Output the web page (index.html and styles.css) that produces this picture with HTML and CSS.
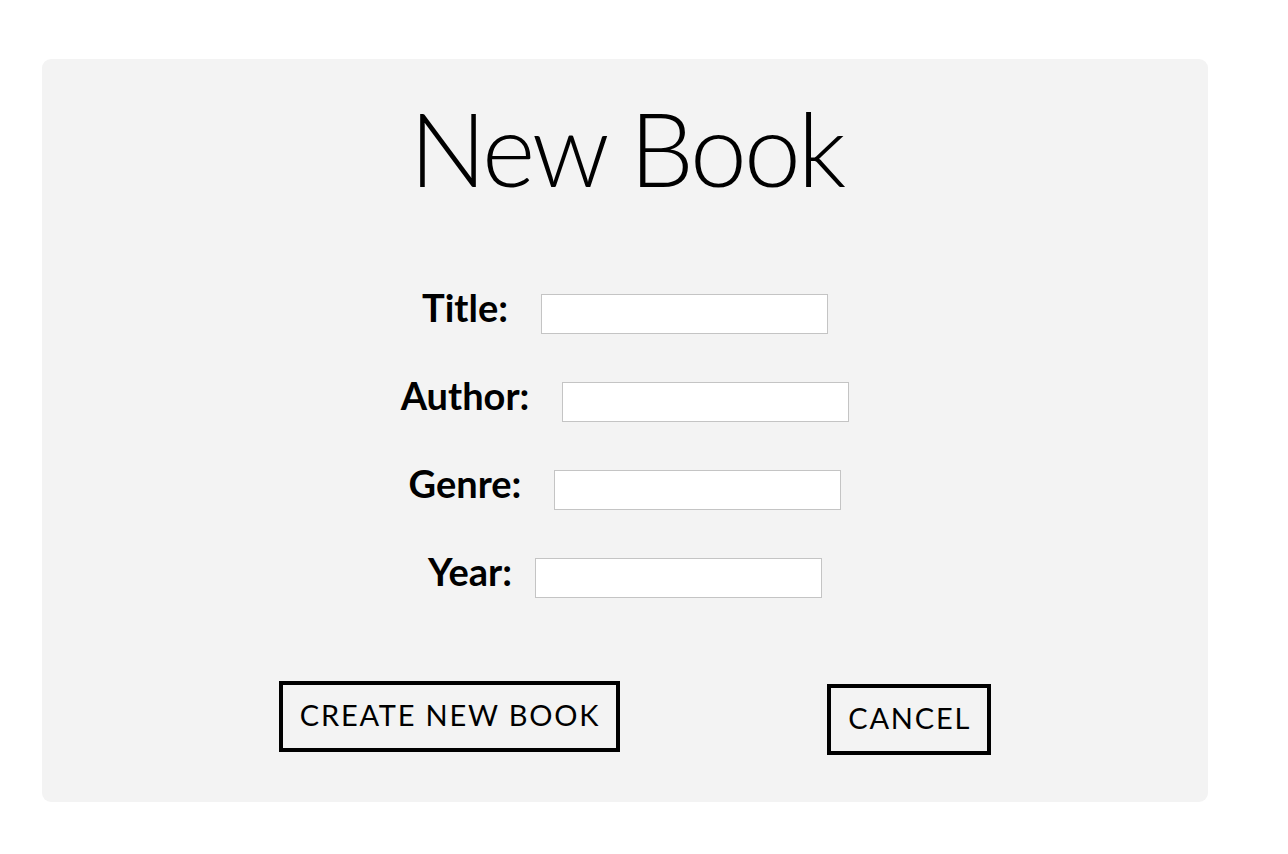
FILE: index.html
```html
<!DOCTYPE html>
<html lang="en">
<head>
<meta charset="utf-8">
<title>New Book</title>
<link rel="stylesheet" href="styles.css">
</head>
<body>
<div class="page">
  <form class="card">
    <h1 class="card-title">New Book</h1>
    <div class="fields">
      <div class="field">
        <label class="field-label" for="title">Title:</label>
        <input class="field-input" id="title" type="text">
      </div>
      <div class="field">
        <label class="field-label" for="author">Author:</label>
        <input class="field-input" id="author" type="text">
      </div>
      <div class="field">
        <label class="field-label" for="genre">Genre:</label>
        <input class="field-input" id="genre" type="text">
      </div>
      <div class="field field-tight">
        <label class="field-label" for="year">Year:</label>
        <input class="field-input" id="year" type="text">
      </div>
    </div>
    <div class="actions">
      <button class="btn" type="button">CREATE NEW BOOK</button>
      <button class="btn btn-cancel" type="button">CANCEL</button>
    </div>
  </form>
</div>
</body>
</html>
```
FILE: styles.css
```css
html, body {
  margin: 0;
  padding: 0;
  background: #ffffff;
}

body {
  font-family: Lato, "Open Sans", "Liberation Sans", sans-serif;
  color: #000;
}

.page {
  padding: 59px 80px 52px 42px;
}

.card {
  background: #f3f3f3;
  border-radius: 9px;
  padding: 39px 0 47px;
  display: flex;
  flex-direction: column;
  align-items: center;
}

.card-title {
  margin: 0;
  font-size: 102px;
  line-height: 100px;
  font-weight: 300;
  letter-spacing: -3px;
  padding-left: 3px;
}

.fields {
  margin-top: 96px;
  display: flex;
  flex-direction: column;
  gap: 48px;
  width: 100%;
}

.field {
  display: flex;
  justify-content: center;
  align-items: flex-start;
  gap: 33px;
}

.field-tight {
  gap: 23px;
}

.field-label {
  font-size: 38px;
  font-weight: 700;
  line-height: 26px;
}

.field-input {
  box-sizing: border-box;
  width: 287px;
  height: 40px;
  margin: 0;
  border: 1px solid #c4c4c4;
  background: #fff;
  border-radius: 0;
  padding: 0 6px;
  font: inherit;
  font-size: 18px;
}

.actions {
  margin-top: 83px;
  display: flex;
  justify-content: center;
  align-items: flex-start;
  gap: 207px;
  padding-left: 20px;
  width: 100%;
  box-sizing: border-box;
}

.btn {
  box-sizing: border-box;
  height: 71px;
  padding: 0 16px 4px 17px;
  border: 4px solid #000;
  border-radius: 0;
  background: transparent;
  color: #000;
  font-family: Lato, "Open Sans", "Liberation Sans", sans-serif;
  font-size: 29px;
  font-weight: 400;
  letter-spacing: 1.8px;
  display: inline-flex;
  align-items: center;
  justify-content: center;
  white-space: nowrap;
  cursor: pointer;
}

.btn-cancel {
  margin-top: 3px;
}
```
